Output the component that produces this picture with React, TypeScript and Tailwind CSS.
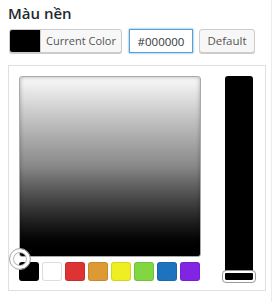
import React from 'react'

const swatches = ['#000000', '#ffffff', '#dd3333', '#dd9933', '#eeee22', '#81d742', '#1e73be', '#8224e3']

export default function App() {
  return (
    <div
      className="w-[275px] h-[302px] bg-white overflow-hidden"
      style={{ fontFamily: '"Open Sans", "Liberation Sans", sans-serif' }}
    >
      <div className="w-[272px] h-full border-r border-[#ececec] pl-2 pt-[3px]">
        <div className="text-[15px] leading-[20px] font-semibold text-[#23282d]">Màu nền</div>

        {/* controls row */}
        <div className="flex items-center mt-[6px] h-[24px]">
          <button className="flex h-[24px] ml-px w-[113px] border border-[#cccccc] rounded-[3px] bg-[#f7f7f7] overflow-hidden shadow-[0_1px_0_#cccccc]">
            <span className="w-[30px] h-full bg-black" />
            <span className="flex-1 text-[11px] leading-[22px] text-[#555555] border-l border-[#cccccc] text-center">
              Current Color
            </span>
          </button>
          <input
            readOnly
            value="#000000"
            className="ml-[7px] w-[64px] h-[24px] border border-[#5b9dd9] shadow-[0_0_2px_rgba(30,140,190,0.8)] px-[6px] text-center text-[11.5px] text-[#32373c] outline-none"
          />
          <button className="ml-[6px] w-[56px] h-[24px] border border-[#cccccc] rounded-[3px] bg-[#f7f7f7] text-[11.5px] text-[#555555] shadow-[0_1px_0_#cccccc]">
            Default
          </button>
        </div>

        {/* picker panel */}
        <div className="relative mt-[12px] w-[258px] h-[226px] border border-[#dfdfdf] flex pl-[10px] pt-[10px]">
          <div className="flex flex-col">
            <div className="w-[182px] h-[181px] rounded-[3px] border border-[#aaaaaa] bg-gradient-to-b from-[#fafafa] via-[#888888] to-black shadow-[inset_0_0_4px_rgba(0,0,0,0.3)]" />
            <div className="flex gap-[3px] mt-[5px]">
              {swatches.map((c) => (
                <div
                  key={c}
                  className="w-[20px] h-[19px] rounded-[3px] shadow-[inset_0_0_0_1px_rgba(0,0,0,0.1)]"
                  style={{ background: c, boxShadow: c === '#ffffff' ? 'inset 0 0 0 1px #dddddd' : undefined }}
                />
              ))}
            </div>
          </div>
          <div className="relative ml-[24px] w-[28px] h-[205px] rounded-[3px] bg-black">
            <div className="absolute left-[-3px] bottom-[-2px] w-[34px] h-[13px] rounded-[4px] border border-[#999999] shadow-[inset_0_0_0_2px_#ffffff]" />
          </div>
          <div className="absolute left-[0px] top-[182px] w-[22px] h-[22px] rounded-full border border-[#aaaaaa] shadow-[inset_0_0_0_3px_#ffffff,inset_0_0_0_4px_#bbbbbb]" />
        </div>
      </div>
    </div>
  )
}
